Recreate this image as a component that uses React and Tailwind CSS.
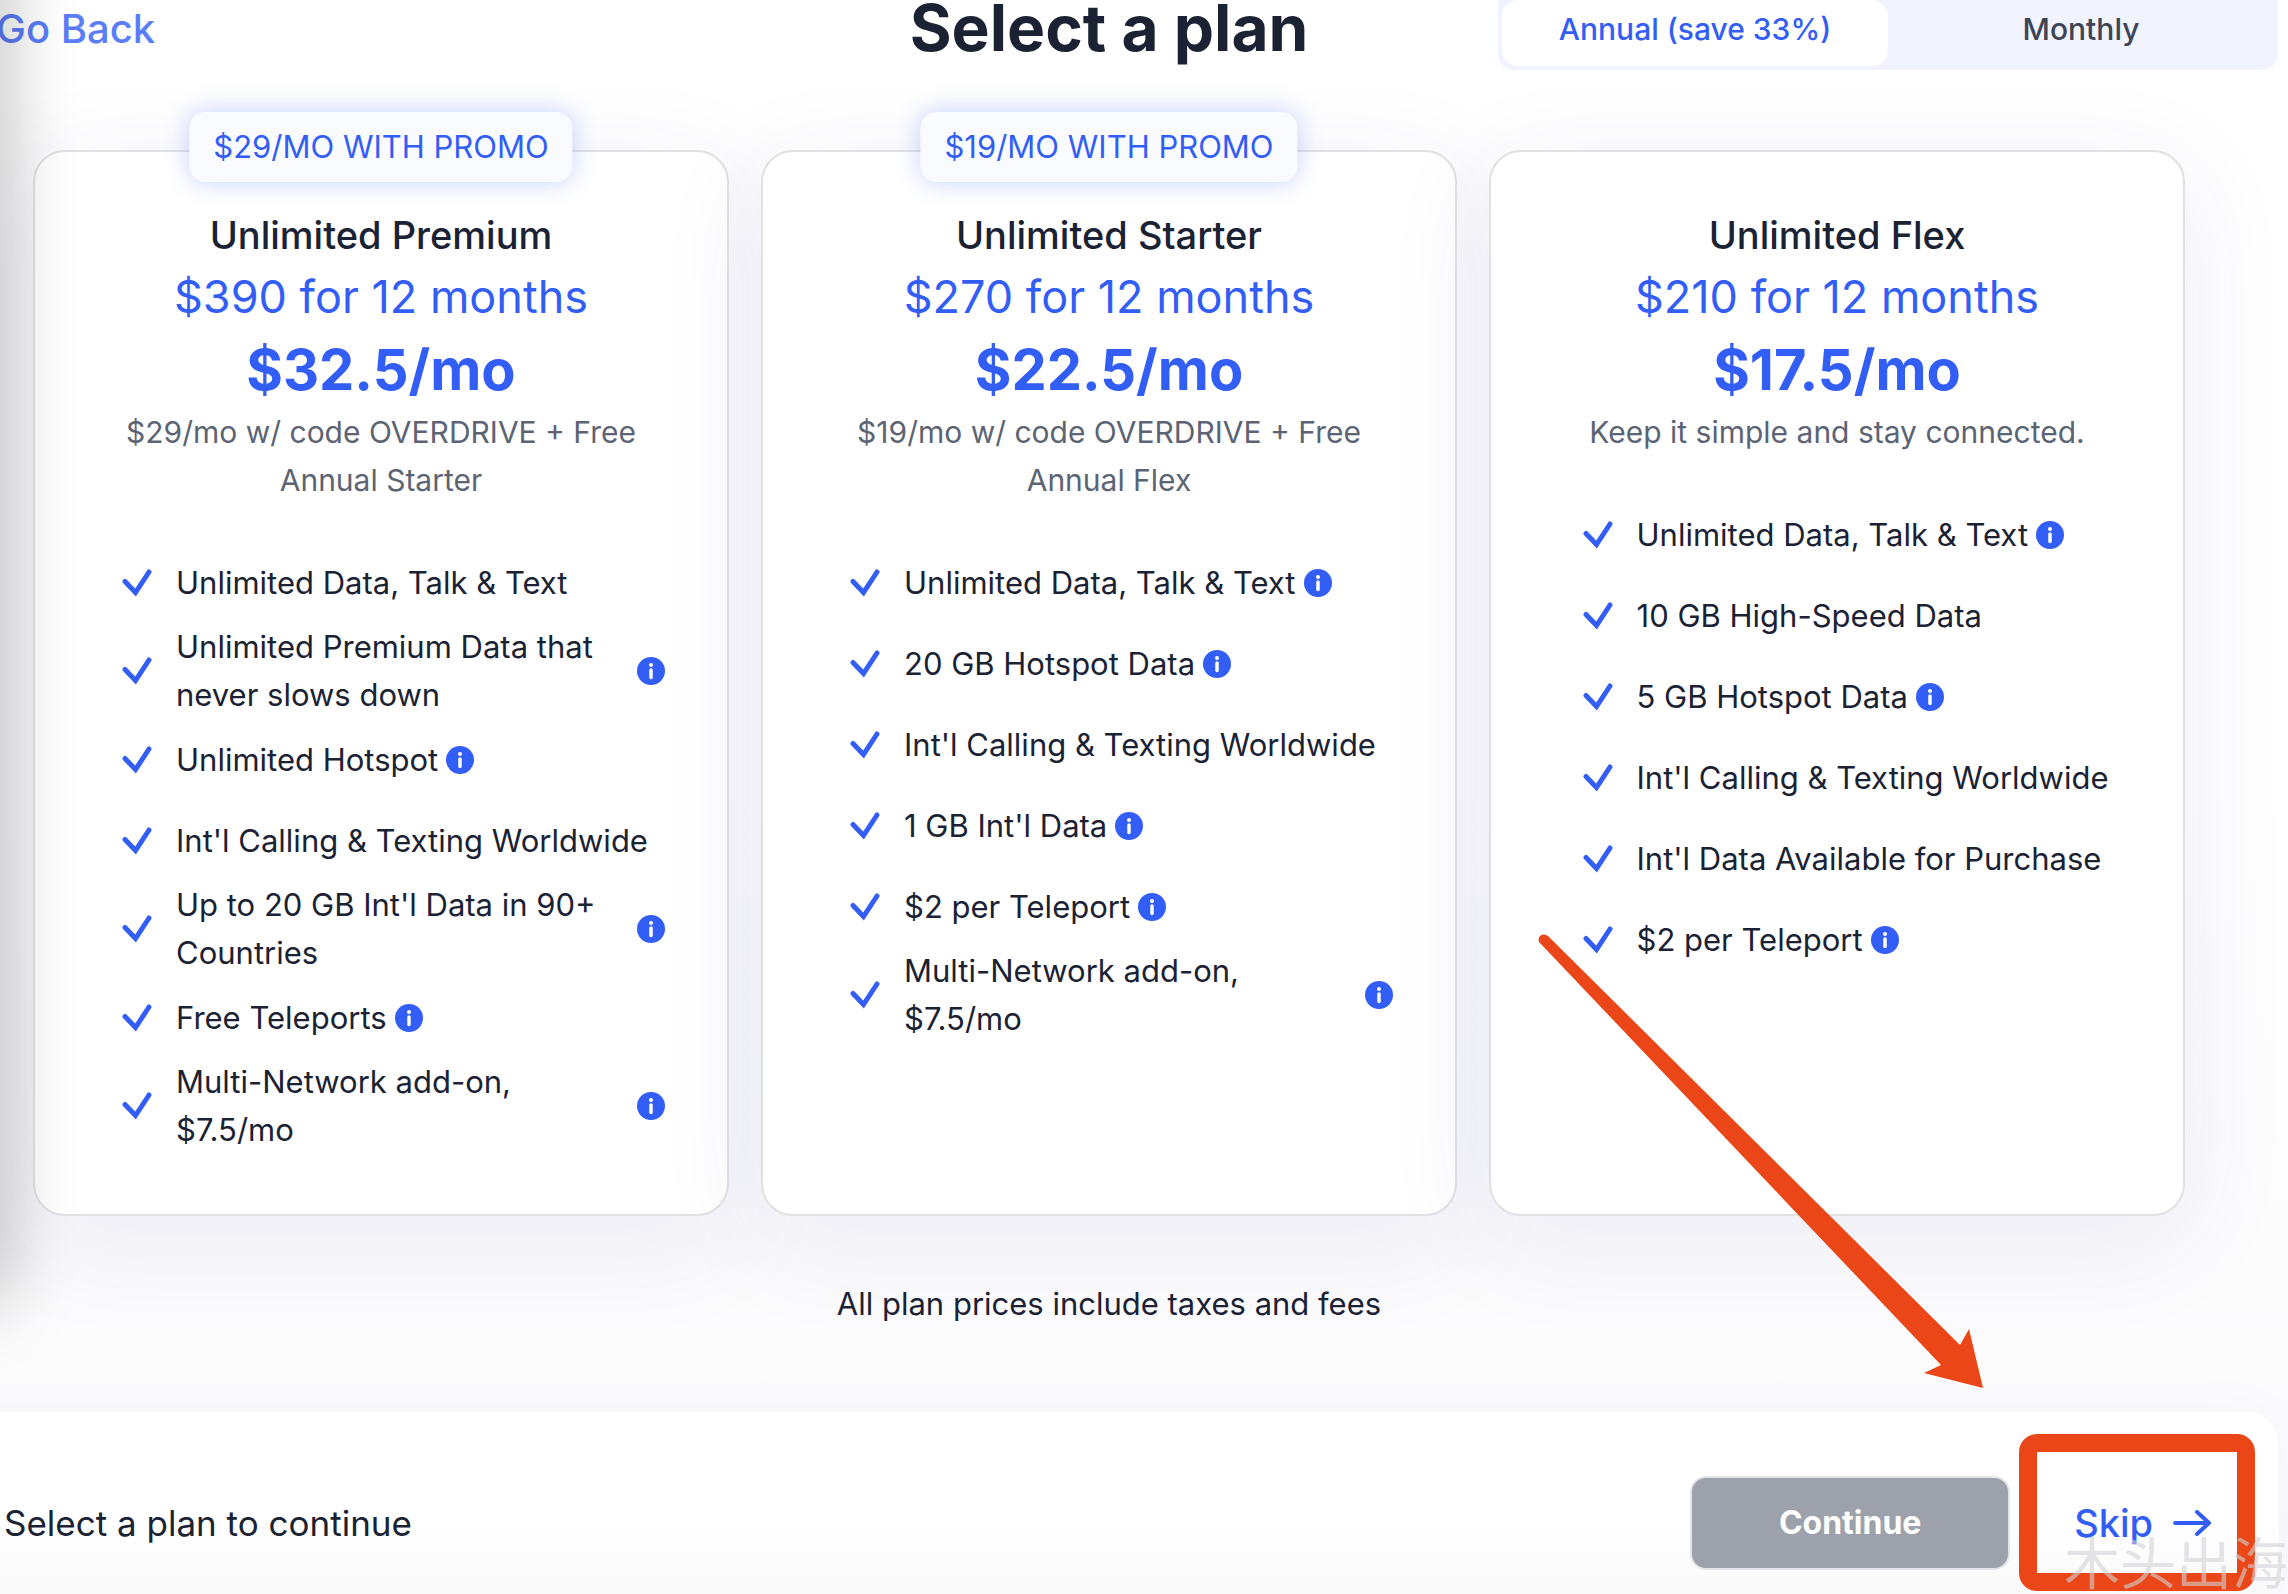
import { useState } from 'react';

const plans = [
  {
    name: 'Unlimited Premium',
    promo: '$29/MO WITH PROMO',
    total: '$390 for 12 months',
    monthly: '$32.5/mo',
    note: '$29/mo w/ code OVERDRIVE + Free Annual Starter',
    features: [
      { text: 'Unlimited Data, Talk & Text' },
      { text: 'Unlimited Premium Data that never slows down', info: true },
      { text: 'Unlimited Hotspot', info: true },
      { text: "Int'l Calling & Texting Worldwide" },
      { text: "Up to 20 GB Int'l Data in 90+ Countries", info: true },
      { text: 'Free Teleports', info: true },
      { text: 'Multi-Network add-on, $7.5/mo', info: true },
    ],
  },
  {
    name: 'Unlimited Starter',
    promo: '$19/MO WITH PROMO',
    total: '$270 for 12 months',
    monthly: '$22.5/mo',
    note: '$19/mo w/ code OVERDRIVE + Free Annual Flex',
    features: [
      { text: 'Unlimited Data, Talk & Text', info: true },
      { text: '20 GB Hotspot Data', info: true },
      { text: "Int'l Calling & Texting Worldwide" },
      { text: "1 GB Int'l Data", info: true },
      { text: '$2 per Teleport', info: true },
      { text: 'Multi-Network add-on, $7.5/mo', info: true },
    ],
  },
  {
    name: 'Unlimited Flex',
    total: '$210 for 12 months',
    monthly: '$17.5/mo',
    note: 'Keep it simple and stay connected.',
    features: [
      { text: 'Unlimited Data, Talk & Text', info: true },
      { text: '10 GB High-Speed Data' },
      { text: '5 GB Hotspot Data', info: true },
      { text: "Int'l Calling & Texting Worldwide" },
      { text: "Int'l Data Available for Purchase" },
      { text: '$2 per Teleport', info: true },
    ],
  },
];

function Check() {
  return (
    <svg viewBox="0 0 30 28" className="w-[30px] h-7 shrink-0" fill="none" stroke="#335ef6" strokeWidth="5" strokeLinecap="round">
      <path d="M3 12.5 13.5 23.5 27 3" />
    </svg>
  );
}

function InfoButton({ label }) {
  return (
    <button type="button" aria-label={`About ${label}`} className="shrink-0">
      <svg viewBox="0 0 28 28" className="w-7 h-7">
        <circle cx="14" cy="14" r="14" fill="#335ef6" />
        <circle cx="14" cy="8" r="2" fill="#fff" />
        <path d="M14 13v7.5" stroke="#fff" strokeWidth="3.5" strokeLinecap="round" />
      </svg>
    </button>
  );
}

function PlanCard({ plan }) {
  return (
    <article className="relative flex-1 rounded-[32px] border-2 border-[#e1e1e4] bg-white pt-14 pb-15 shadow-[0_24px_110px_rgba(60,60,140,0.09)]">
      {plan.promo && (
        <div className="absolute -top-10 left-1/2 -translate-x-1/2 whitespace-nowrap rounded-2xl bg-[#fafbff] px-6 text-[31px] leading-[70px] text-[#335ef6] shadow-[0_0_24px_rgba(51,94,246,0.28)]">
          {plan.promo}
        </div>
      )}
      <div className="px-16 text-center">
        <h2 className="text-[38px] leading-[54px] font-medium text-[#1a2233]">{plan.name}</h2>
        <p className="text-[45px] leading-[70px] text-[#335ef6]">{plan.total}</p>
        <p className="text-[56px] leading-[76px] font-bold text-[#335ef6]">{plan.monthly}</p>
        <p className="text-[30px] leading-[48px] text-[#5c6474]">{plan.note}</p>
      </div>
      <div className="mt-[38px] flex justify-center pl-[87px] pr-[62px]">
        <ul>
          {plan.features.map((f) => (
            <li key={f.text} className="flex min-h-[81px] items-center">
              <Check />
              <span className="ml-6 mr-2 text-[31px] leading-[48px] text-[#1a2233]">{f.text}</span>
              {f.info && <InfoButton label={f.text} />}
            </li>
          ))}
        </ul>
      </div>
    </article>
  );
}

export default function App() {
  const [billing, setBilling] = useState('annual');

  const tab = (id) =>
    billing === id
      ? 'flex-1 rounded-2xl bg-white pb-2 text-[#335ef6]'
      : 'flex-1 rounded-2xl pb-2 text-[#3d4454]';

  return (
    <div className="relative flex min-h-screen flex-col overflow-hidden bg-linear-to-b from-white from-50% to-[#fafafc] font-['Inter',sans-serif] text-[#1a2233]">
      <main className="-ml-[60px] mr-[10px] flex flex-1 flex-col">
        <header className="grid h-[70px] grid-cols-[1fr_auto_1fr] items-start">
          <div className="pl-14">
            <a href="#" className="text-[40px] leading-[58px] font-medium text-[#5a7df8]">Go Back</a>
          </div>
          <h1 className="text-[64px] leading-[56px] font-bold">Select a plan</h1>
          <div className="flex justify-end">
            <div className="flex h-[70px] w-[780px] rounded-b-2xl bg-[#f1f3ff] px-1 pb-1 text-[30px] leading-[56px] font-medium">
              <button type="button" onClick={() => setBilling('annual')} className={tab('annual')}>
                Annual (save 33%)
              </button>
              <button type="button" onClick={() => setBilling('monthly')} className={tab('monthly')}>
                Monthly
              </button>
            </div>
          </div>
        </header>

        <section className="flex gap-8 px-[93px] pt-20">
          {plans.map((plan) => (
            <PlanCard key={plan.name} plan={plan} />
          ))}
        </section>

        <p className="relative mt-16 text-center text-[31px] leading-[48px]">All plan prices include taxes and fees</p>
      </main>

      {/* soft edge of the side panel */}
      <div className="pointer-events-none absolute -left-10 -top-20 h-[1380px] w-10 shadow-[0_0_70px_rgba(0,0,0,0.36)]" />

      <footer className="relative -ml-[60px] mr-[10px] flex h-[182px] items-center justify-between rounded-tr-[32px] bg-linear-to-b from-white from-60% to-[#f9f9fa] pl-16 pr-[67px] pt-10 shadow-[0_0_60px_rgba(60,60,120,0.03)]">
        <p className="text-[35px] leading-[48px]">Select a plan to continue</p>
        <div className="flex items-center gap-16">
          <button type="button" disabled className="h-[94px] w-[320px] rounded-2xl border-2 border-[#e5e6ea] bg-[#9da1ab] text-[32px] font-bold text-white">
            Continue
          </button>
          <a href="#" className="flex items-center gap-5 text-[38px] font-medium text-[#335ef6]">
            Skip
            <svg viewBox="0 0 38 26" className="w-[38px] h-[26px]" fill="none" stroke="currentColor" strokeWidth="4" strokeLinecap="round" strokeLinejoin="round">
              <path d="M2 13h34M24 2l12 11-12 11" />
            </svg>
          </a>
        </div>
      </footer>

      {/* highlight around the skip link */}
      <div className="pointer-events-none absolute bottom-[3px] right-[33px] h-[157px] w-[236px] rounded-[18px] border-[18px] border-[#ea4617]" />
      <svg viewBox="0 0 450 456" className="pointer-events-none absolute bottom-[206px] right-[303px] w-[450px] h-[456px]" fill="#ea4617">
        <path d="M4 10C2 4 8 0 13 4L425 413 434 397 448 456 389 441 406 433Z" />
      </svg>
      <div className="pointer-events-none absolute -bottom-1 right-0 whitespace-nowrap font-['Noto_Sans_CJK_SC',sans-serif] text-[56px] leading-[76px] text-[#d2d2d8]/60">
        木头出海
      </div>
    </div>
  );
}
